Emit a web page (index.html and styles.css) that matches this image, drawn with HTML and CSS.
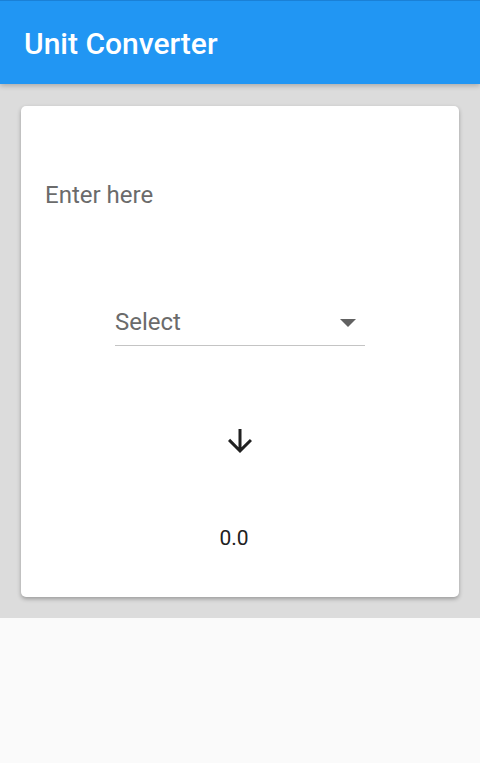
FILE: index.html
```html
<!DOCTYPE html>
<html lang="en">
<head>
<meta charset="utf-8">
<title>Unit Converter</title>
<link rel="stylesheet" href="styles.css">
</head>
<body>
<header class="app-bar">
  <h1 class="app-title">Unit Converter</h1>
</header>
<main class="content">
  <section class="card">
    <div class="input-field">Enter here</div>
    <div class="select-row">
      <div class="select">
        <span class="select-label">Select</span>
        <svg class="select-caret" width="16" height="8" viewBox="0 0 16 8"><path d="M0 0h16L8 8z" fill="#616161"/></svg>
      </div>
    </div>
    <div class="arrow-row">
      <svg class="arrow" width="36" height="36" viewBox="0 0 24 24"><path d="M20 12l-1.41-1.41L13 16.17V4h-2v12.17l-5.58-5.59L4 12l8 8 8-8z" fill="#212121"/></svg>
    </div>
    <div class="result">0.0</div>
  </section>
</main>
<div class="rest"></div>
</body>
</html>
```

FILE: styles.css
```css
html, body {
  margin: 0;
  padding: 0;
  background: #fafafa;
  font-family: Roboto, "Noto Sans", "Liberation Sans", sans-serif;
}

.app-bar {
  position: relative;
  z-index: 2;
  height: 84px;
  box-sizing: border-box;
  background: #2196f3;
  border-top: 1px solid #1a80d6;
  display: flex;
  align-items: center;
  padding-left: 24px;
  padding-top: 2px;
  box-shadow: 0 2px 5px rgba(0, 0, 0, 0.22);
}

.app-title {
  margin: 0;
  font-size: 30px;
  font-weight: 500;
  color: #ffffff;
  letter-spacing: 0;
}

.content {
  background: #dcdcdc;
  padding: 22px 21px 21px;
}

.card {
  background: #ffffff;
  border-radius: 5px;
  height: 491px;
  box-sizing: border-box;
  box-shadow: 0 2px 4px rgba(0, 0, 0, 0.3);
  display: flex;
  flex-direction: column;
  padding-top: 74px;
}

.input-field {
  padding-left: 24px;
  font-size: 24px;
  line-height: 30px;
  color: #6b6b6b;
}

.select-row {
  display: flex;
  justify-content: center;
  margin-top: 88px;
}

.select {
  width: 250px;
  height: 48px;
  box-sizing: border-box;
  border-bottom: 1px solid #c4c4c4;
  display: flex;
  align-items: center;
  justify-content: space-between;
  padding-right: 9px;
}

.select-label {
  font-size: 24px;
  color: #6b6b6b;
}

.select-caret {
  display: block;
  margin-top: 2px;
}

.arrow-row {
  display: flex;
  justify-content: center;
  margin-top: 77px;
}

.arrow {
  display: block;
}

.result {
  margin-top: 67px;
  text-align: center;
  padding-right: 12px;
  font-size: 21px;
  line-height: 24px;
  color: #212121;
}

.rest {
  height: 145px;
}
```
